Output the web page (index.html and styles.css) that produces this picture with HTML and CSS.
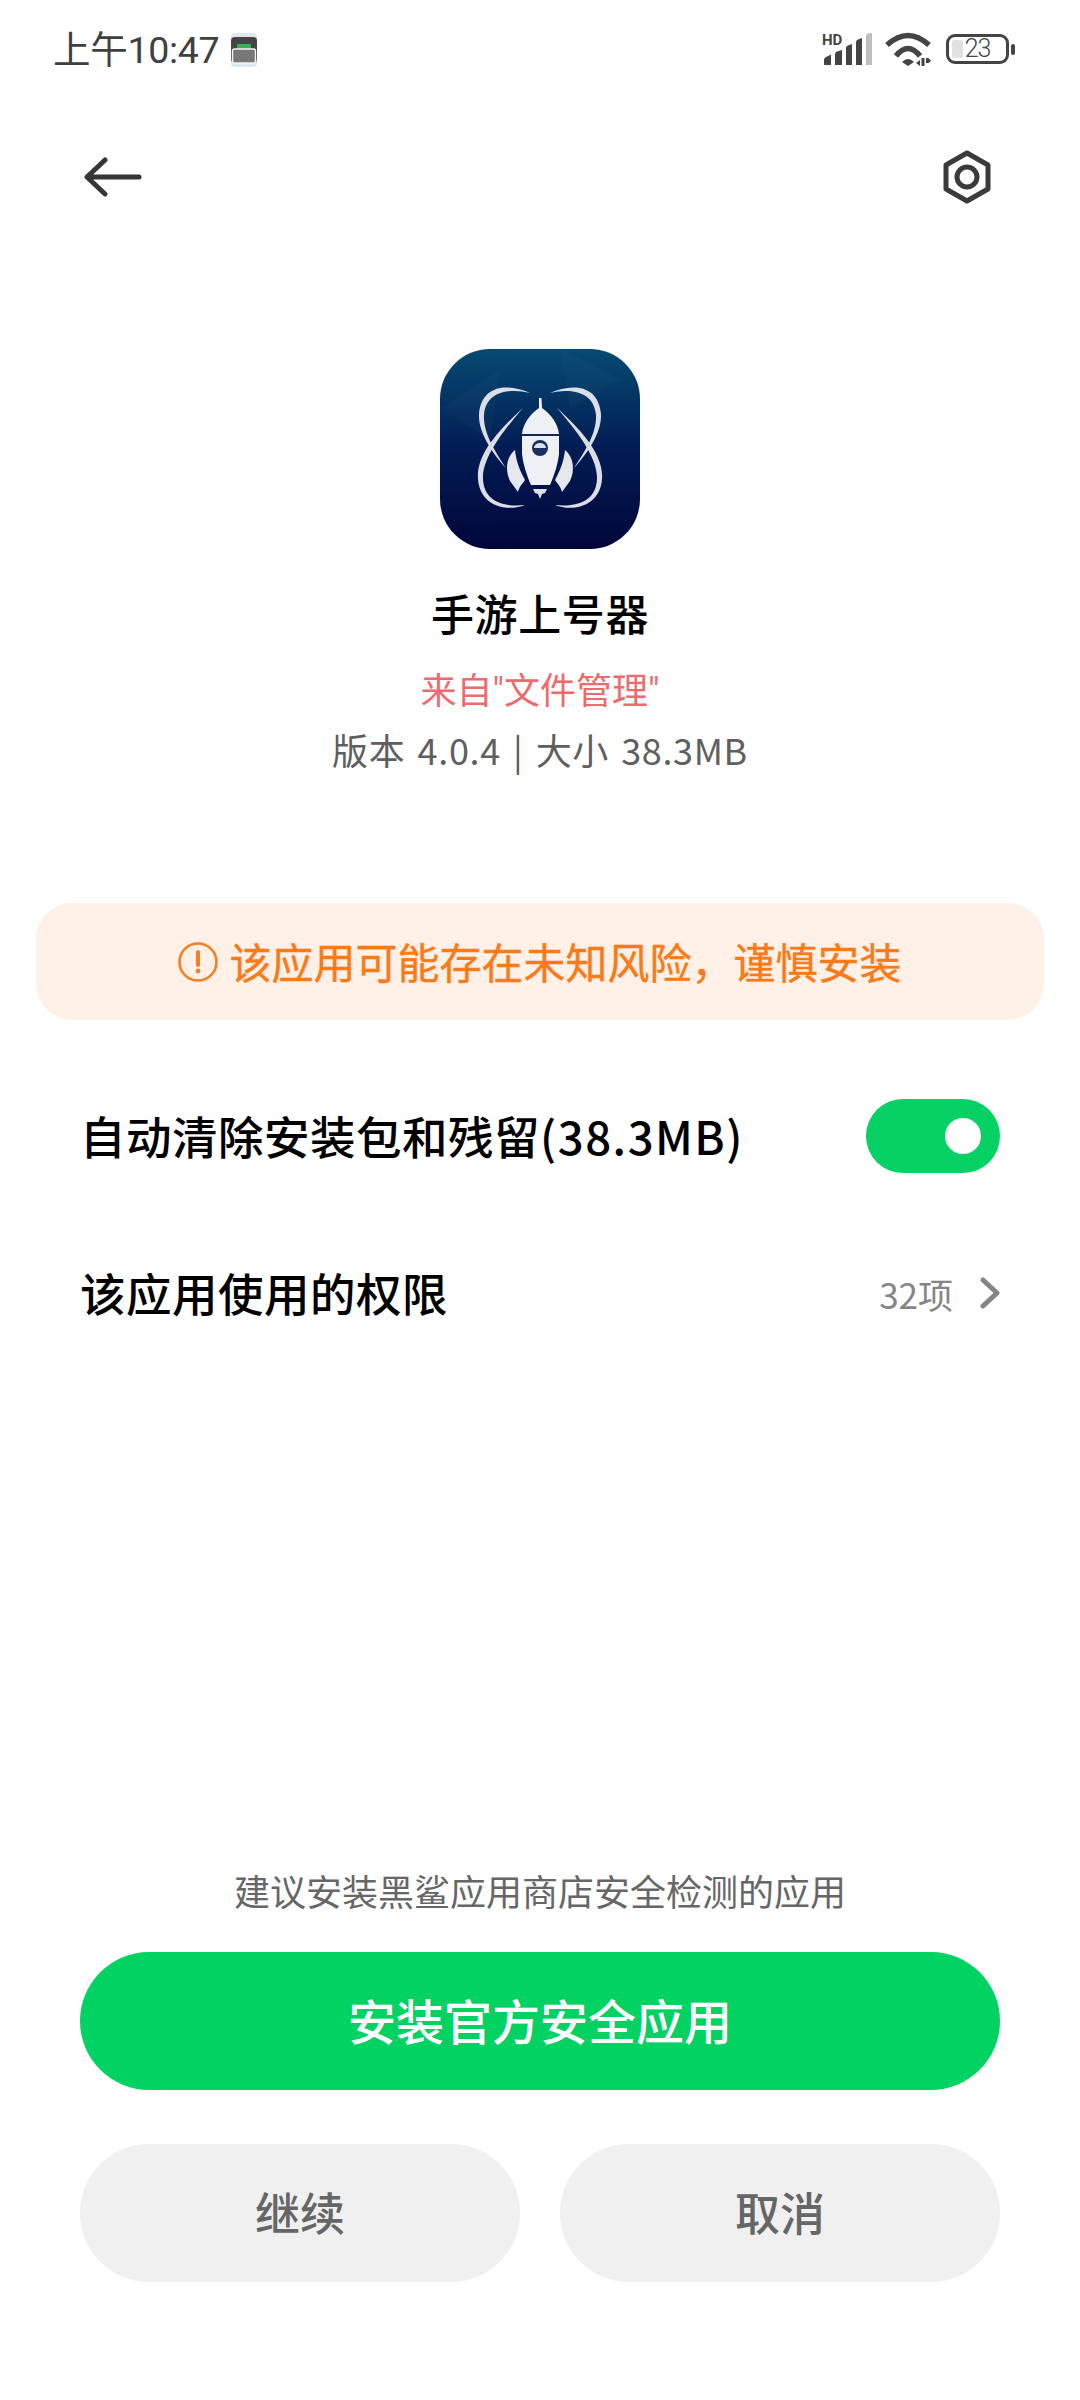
FILE: index.html
```html
<!DOCTYPE html>
<html lang="zh-CN">
<head>
<meta charset="utf-8">
<title>安装</title>
<link rel="stylesheet" href="styles.css">
</head>
<body>
<div class="page">
  <header class="status">
    <div class="status-left">
      <span class="clock">上午10:47</span>
      <svg class="notif" viewBox="0 0 26 34" width="26" height="34">
        <rect width="26" height="34" rx="4" fill="#dfe7f0"/>
        <rect x="0" y="4" width="26" height="26" rx="4" fill="#444"/>
        <rect x="6" y="11" width="14" height="7" rx="1" fill="#2fb356"/>
        <rect x="1.5" y="16" width="23" height="14" rx="2" fill="#777" stroke="#f2f2f2" stroke-width="1.5"/>
      </svg>
    </div>
    <div class="status-right">
      <svg class="signal" viewBox="0 0 50 32" width="50" height="32">
        <text x="0" y="12" class="hd">HD</text>
        <path d="M2 32v-5q0-2 2-3l5-2.500v10.500zM13 32V21q0-2 2-2.500l5-1.500v15zM24 32V15q0-2 2-2.500l4-1.500v21zM34 32V9q0-2 2-2.500l4-1.500v27z" fill="#444"/>
        <path d="M44 32V3q0-2 2-2.500l4-.5v32z" fill="#bdbdbd"/>
      </svg>
      <svg class="wifi" viewBox="0 0 46 34" width="46" height="34">
        <path d="M2 13Q23-6 44 13" fill="none" stroke="#444" stroke-width="5.500"/>
        <path d="M11 24Q23 9 35 24" fill="none" stroke="#444" stroke-width="5.500"/>
        <path d="M17 30Q23 24 29 30L23 34Z" fill="#444"/>
        <path d="M31 31l4-3v6zM36.500 26h3v8h-3zM41 26h2.500l2.500 3-2.500 2h-2.500z" fill="#444"/>
      </svg>
      <div class="battery">
        <div class="battery-body">
          <span class="battery-fill"></span>
          <span class="battery-num">23</span>
        </div>
        <span class="battery-cap"></span>
      </div>
    </div>
  </header>

  <nav class="nav">
    <svg viewBox="0 0 58 40" width="58" height="40" class="back">
      <path d="M55 20H4M21 3 3 20l18 17" fill="none" stroke="#363636" stroke-width="5" stroke-linecap="round" stroke-linejoin="round"/>
    </svg>
    <svg viewBox="0 0 50 54" width="50" height="54" class="gear">
      <path d="M25 3 46 15V39L25 51 4 39V15Z" fill="none" stroke="#3a3a3a" stroke-width="5" stroke-linejoin="round"/>
      <circle cx="25" cy="27" r="10" fill="none" stroke="#3a3a3a" stroke-width="5"/>
    </svg>
  </nav>

  <section class="app">
    <svg class="app-icon" viewBox="0 0 200 200" width="200" height="200">
      <defs>
        <linearGradient id="bg" x1="0" y1="0" x2="0" y2="1">
          <stop offset="0" stop-color="#064a72"/>
          <stop offset=".5" stop-color="#021c54"/>
          <stop offset="1" stop-color="#01063a"/>
        </linearGradient>
        <g id="orbit">
          <path d="M90 44C70 35 42 34 39 65C38 85 55 107 66 119C57 105 43 85 44 66C46 42 70 39 90 44Z"/>
          <path d="M83 59C60 80 36 105 38 130C40 158 68 163 85 156C68 158 44 155 43 130C42 108 65 80 83 59Z"/>
        </g>
      </defs>
      <rect width="200" height="200" rx="50" fill="url(#bg)"/>
      <path d="M0 60 60 20 50 90ZM120 0 180 30 130 60Z" fill="#fff" opacity=".025"/>
      <g fill="#dcdee6">
        <use href="#orbit"/>
        <use href="#orbit" transform="matrix(-1 0 0 1 200 0)"/>
      </g>
      <path d="M99 49h2.500l.5 10c9 6 16 16 17 26v20c-1 10-5 22-9 31H91c-4-9-8-21-9-31V85c1-10 8-20 17-26z" fill="#eff0f4"/>
      <path d="M82 86H119" stroke="#12285c" stroke-width="2"/>
      <circle cx="100" cy="99" r="8" fill="#17305f"/>
      <path d="M94 99a6 5 0 0 1 12 0z" fill="#dfe1e8"/>
      <path d="M75 101C66 108 65 122 70 132L78 143C79 138 83 134 85 131C80 122 76 112 75 101Z" fill="#e6e7ec"/>
      <path d="M125 101C134 108 135 122 130 132L122 143C121 138 117 134 115 131C120 122 124 112 125 101Z" fill="#e6e7ec"/>
      <path d="M93 140h14l-2 4-3 1-2 5-2-5-3-1z" fill="#dfe1e8"/>
    </svg>
    <h1 class="app-name">手游上号器</h1>
    <p class="app-source">来自"文件管理"</p>
    <p class="app-meta">版本 4.0.4 | 大小 38.3MB</p>
  </section>

  <div class="warning">
    <svg viewBox="0 0 40 40" width="40" height="40">
      <circle cx="20" cy="20" r="18.500" fill="none" stroke="#f57f25" stroke-width="2.600"/>
      <path d="M20 10v13" stroke="#f57f25" stroke-width="4" stroke-linecap="round"/>
      <circle cx="20" cy="29" r="2.400" fill="#f57f25"/>
    </svg>
    <span class="warning-text">该应用可能存在未知风险，谨慎安装</span>
  </div>

  <div class="row row-clean">
    <span class="row-label">自动清除安装包和残留<span class="row-size">(38.3MB)</span></span>
    <span class="toggle"><span class="knob"></span></span>
  </div>
  <div class="row row-perm">
    <span class="row-label">该应用使用的权限</span>
    <span class="row-value">32项
      <svg viewBox="0 0 20 32" width="20" height="32">
        <path d="M3 3 17 16 3 29" fill="none" stroke="#858585" stroke-width="5" stroke-linecap="round" stroke-linejoin="round"/>
      </svg>
    </span>
  </div>

  <footer class="foot">
    <p class="hint">建议安装黑鲨应用商店安全检测的应用</p>
    <button class="btn btn-main">安装官方安全应用</button>
    <div class="btn-row">
      <button class="btn btn-sub">继续</button>
      <button class="btn btn-sub">取消</button>
    </div>
  </footer>
</div>
</body>
</html>
```

FILE: styles.css
```css
* { box-sizing: border-box; }
html, body { margin: 0; padding: 0; background: #fff; }
body { font-family: "Noto Sans CJK SC", "Noto Sans", Roboto, sans-serif; }
p, h1 { margin: 0; font-weight: 400; }
.page { width: 1080px; height: 2400px; display: flex; flex-direction: column; overflow: hidden; }

.status { height: 100px; padding: 30px 65px 0 53px; display: flex; justify-content: space-between; align-items: flex-start; }
.status-left { display: flex; align-items: center; gap: 12px; height: 40px; }
.clock { font-family: Roboto, "Noto Sans CJK SC", sans-serif; font-size: 37.500px; line-height: 40px; color: #404040; letter-spacing: -.3px; }
.status-right { display: flex; align-items: flex-start; gap: 13px; }
.signal { margin-top: 3px; overflow: visible; }
.wifi { margin-top: 2px; overflow: visible; }
.hd { font-family: Roboto, sans-serif; font-weight: 700; font-size: 15px; fill: #444; }
.battery { display: flex; align-items: center; gap: 2px; height: 30px; margin: 4px 0 0 2px; }
.battery-body { position: relative; width: 63px; height: 30px; border: 3.500px solid #444; border-radius: 9px; display: flex; align-items: center; justify-content: center; }
.battery-fill { position: absolute; left: 3px; top: 3px; bottom: 3px; width: 11px; background: #e2e2e2; border-radius: 2px; }
.battery-num { position: relative; font-family: Roboto, sans-serif; font-weight: 300; font-size: 25px; line-height: 22px; letter-spacing: -1px; color: #444; }
.battery-cap { width: 4px; height: 11px; background: #444; border-radius: 2px; }

.nav { height: 154px; padding: 0 88px 0 84px; display: flex; align-items: center; justify-content: space-between; }
.back, .gear { display: block; }

.app { display: flex; flex-direction: column; align-items: center; padding-top: 95px; }
.app-icon { display: block; }
.app-name { margin-top: 33px; font-size: 43px; line-height: 60px; font-weight: 500; color: #000; letter-spacing: .6px; }
.app-source { margin-top: 25px; font-family: Roboto, "Noto Sans CJK SC", sans-serif; font-size: 36px; line-height: 50px; color: #ee6a6e; }
.app-meta { margin-top: 7px; font-size: 36px; line-height: 50px; color: #5f5f5f; letter-spacing: .65px; word-spacing: 3.500px; }

.warning { margin: 129px 36px 0; height: 117px; background: #fff1e7; border-radius: 36px; display: flex; align-items: center; justify-content: center; gap: 11px; color: #f97a18; font-size: 42px; }
.warning svg { display: block; }
.warning-text { -webkit-text-stroke: .4px #f97a18; margin-bottom: 3px; }

.row { display: flex; align-items: center; justify-content: space-between; padding: 0 80px; }
.row-clean { height: 74px; margin-top: 79px; }
.row-perm { height: 60px; margin-top: 90px; }
.row-label { font-size: 45.500px; line-height: 60px; font-weight: 500; color: #000; letter-spacing: .5px; margin-bottom: 3px; }
.row-size { letter-spacing: 1.500px; }
.toggle { width: 134px; height: 74px; border-radius: 37px; background: #05d164; display: flex; align-items: center; justify-content: flex-end; padding-right: 19px; }
.knob { width: 36px; height: 36px; border-radius: 50%; background: #fff; }
.row-value { display: flex; align-items: center; gap: 27px; font-size: 35px; color: #858585; }
.row-value svg { display: block; }

.foot { margin-top: auto; padding: 0 80px 118px; display: flex; flex-direction: column; }
.hint { font-size: 36px; line-height: 50px; color: #666; text-align: center; margin-top: -1px; }
.btn { border: 0; padding: 0 0 4px; font-family: inherit; font-weight: 500; height: 138px; border-radius: 69px; }
.btn-main { margin-top: 37px; width: 100%; background: #02d262; color: #fff; font-size: 48px; }
.btn-row { display: flex; justify-content: space-between; margin-top: 54px; }
.btn-sub { width: 440px; background: #f0f0f0; color: #666; font-size: 45px; }
```
